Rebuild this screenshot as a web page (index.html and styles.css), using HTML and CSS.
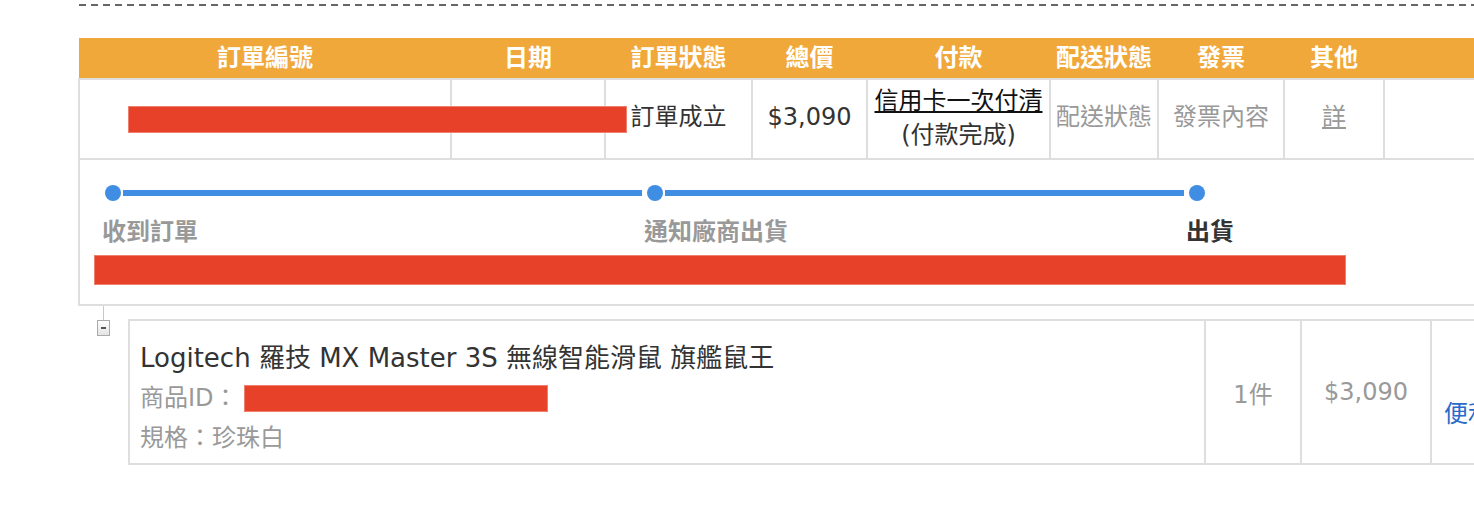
FILE: index.html
```html
<!DOCTYPE html>
<html lang="zh-Hant">
<head>
    <meta charset="UTF-8">
    <meta name="viewport" content="width=device-width, initial-scale=1.0">
    <title>訂單查詢</title>
    <link rel="stylesheet" href="styles.css">
</head>
<body>
<div class="page">
    <div class="dash-rule"></div>

    <div class="order">
        <table class="order-table">
            <colgroup>
                <col class="col-no">
                <col class="col-date">
                <col class="col-status">
                <col class="col-total">
                <col class="col-pay">
                <col class="col-ship">
                <col class="col-invoice">
                <col class="col-other">
                <col class="col-extra">
            </colgroup>
            <thead>
                <tr>
                    <th>訂單編號</th>
                    <th>日期</th>
                    <th>訂單狀態</th>
                    <th>總價</th>
                    <th>付款</th>
                    <th>配送狀態</th>
                    <th>發票</th>
                    <th>其他</th>
                    <th></th>
                </tr>
            </thead>
            <tbody>
                <tr class="order-row">
                    <td></td>
                    <td></td>
                    <td>訂單成立</td>
                    <td>$3,090</td>
                    <td class="pay"><a class="pay-link" href="#">信用卡一次付清</a><br>(付款完成)</td>
                    <td class="muted">配送狀態</td>
                    <td class="muted">發票內容</td>
                    <td class="muted"><a class="detail-link" href="#">詳</a></td>
                    <td></td>
                </tr>
                <tr>
                    <td class="progress-cell" colspan="9">
                        <div class="steps">
                            <div class="step">
                                <div class="step-track"><span class="step-dot"></span><span class="step-line"></span></div>
                                <div class="step-label">收到訂單</div>
                            </div>
                            <div class="step">
                                <div class="step-track"><span class="step-dot"></span><span class="step-line"></span></div>
                                <div class="step-label">通知廠商出貨</div>
                            </div>
                            <div class="step step-current">
                                <div class="step-track"><span class="step-dot"></span></div>
                                <div class="step-label">出貨</div>
                            </div>
                        </div>
                        <div class="redact redact-note"></div>
                    </td>
                </tr>
            </tbody>
        </table>
        <span class="redact redact-order"></span>
    </div>

    <div class="items">
        <div class="tree-gutter">
            <span class="tree-line"></span>
            <span class="tree-toggle"></span>
        </div>
        <table class="item-table">
            <colgroup>
                <col class="col-info">
                <col class="col-qty">
                <col class="col-price">
                <col class="col-deliver">
            </colgroup>
            <tr>
                <td class="item-info">
                    <div class="item-title">Logitech 羅技 MX Master 3S 無線智能滑鼠 旗艦鼠王</div>
                    <div class="item-meta">商品ID：<span class="redact redact-id"></span></div>
                    <div class="item-meta">規格：珍珠白</div>
                </td>
                <td class="item-num">1件</td>
                <td class="item-num">$3,090</td>
                <td class="item-deliver">便利商店取貨</td>
            </tr>
        </table>
    </div>
</div>
</body>
</html>
```

FILE: styles.css
```css
body {
    margin: 0;
    font-family: "DejaVu Sans", "Noto Sans CJK TC", sans-serif;
    font-size: 24px;
    color: #333;
    background-color: #fff;
}

.page {
    padding-left: 79px;
    overflow: hidden;
}

.dash-rule {
    height: 2px;
    margin-top: 4px;
    background: repeating-linear-gradient(to right, #666 0 7px, transparent 7px 12px);
}

/* Order table */
.order {
    position: relative;
    margin-top: 32px;
    margin-left: -1px;
}

.order-table {
    width: 1445px;
    table-layout: fixed;
    border-collapse: collapse;
}

.col-no { width: 372px; }
.col-date { width: 154px; }
.col-status { width: 147px; }
.col-total { width: 115px; }
.col-pay { width: 183px; }
.col-ship { width: 108px; }
.col-invoice { width: 126px; }
.col-other { width: 100px; }
.col-extra { width: 140px; }

.order-table th {
    height: 40px;
    padding: 0;
    background-color: #f1a83b;
    color: #fff;
    font-weight: bold;
    text-align: center;
    line-height: 40px;
    white-space: nowrap;
}

.order-row td {
    height: 74px;
    padding: 0 0 4px;
    border: 2px solid #dedede;
    text-align: center;
    line-height: 34px;
    white-space: nowrap;
}

.order-row .pay {
    padding: 0 0 2px;
}

.pay-link {
    color: #111;
    text-decoration: underline;
}

.muted {
    color: #999;
}

.detail-link {
    color: #999;
    text-decoration: underline;
}

/* Progress */
.progress-cell {
    padding: 25px 0 19px 14px;
    border-left: 2px solid #dedede;
    border-bottom: 2px solid #dedede;
}

.steps {
    display: flex;
    padding-left: 8px;
}

.step {
    width: 542px;
    flex: none;
}

.step-current {
    width: auto;
}

.step-track {
    display: flex;
    align-items: center;
    height: 16px;
}

.step-dot {
    width: 16px;
    height: 16px;
    margin-left: 3px;
    border-radius: 50%;
    background-color: #3f8ee3;
    flex: none;
}

.step-line {
    flex: 1;
    height: 6px;
    margin: 0 2px;
    background-color: #3f8ee3;
}

.step-label {
    margin-top: 15px;
    line-height: 32px;
    font-weight: bold;
    color: #999;
    white-space: nowrap;
}

.step-current .step-label {
    color: #333;
}

/* Redaction blocks */
.redact {
    display: block;
    box-sizing: border-box;
    background-color: #e8412a;
    border: 1px solid #f0806e;
}

.redact-note {
    width: 1252px;
    height: 30px;
    margin-top: 7px;
}

.redact-order {
    position: absolute;
    top: 68px;
    left: 50px;
    width: 499px;
    height: 27px;
}

.redact-id {
    display: inline-block;
    width: 304px;
    height: 27px;
    margin-left: 6px;
    vertical-align: -6px;
}

/* Items */
.items {
    display: flex;
}

.tree-gutter {
    display: flex;
    flex-direction: column;
    width: 50px;
    flex: none;
}

.tree-line {
    width: 1px;
    height: 14px;
    margin-left: 24px;
    background-color: #c8c8c8;
}

.tree-toggle {
    position: relative;
    box-sizing: border-box;
    width: 13px;
    height: 16px;
    margin-left: 18px;
    border: 1px solid #aaa;
    background: linear-gradient(#fff, #e4e4e4);
}

.tree-toggle::before {
    content: "";
    position: absolute;
    top: 6px;
    left: 3px;
    width: 5px;
    height: 2px;
    background-color: #555;
}

.item-table {
    margin-top: 13px;
    margin-left: -1px;
    width: 1456px;
    flex: none;
    table-layout: fixed;
    border-collapse: collapse;
}

.col-info { width: 1076px; }
.col-qty { width: 96px; }
.col-price { width: 130px; }
.col-deliver { width: 154px; }

.item-table td {
    border: 2px solid #dedede;
    padding: 0;
}

.item-info {
    padding: 17px 8px 5px 10px !important;
}

.item-title {
    font-size: 26px;
    line-height: 40px;
    color: #333;
    white-space: nowrap;
}

.item-meta {
    line-height: 40px;
    color: #999;
    white-space: nowrap;
}

.item-num {
    text-align: center;
    color: #999;
    white-space: nowrap;
}

.item-deliver {
    padding: 38px 0 0 12px !important;
    color: #2a6bc9;
    white-space: nowrap;
}
```
